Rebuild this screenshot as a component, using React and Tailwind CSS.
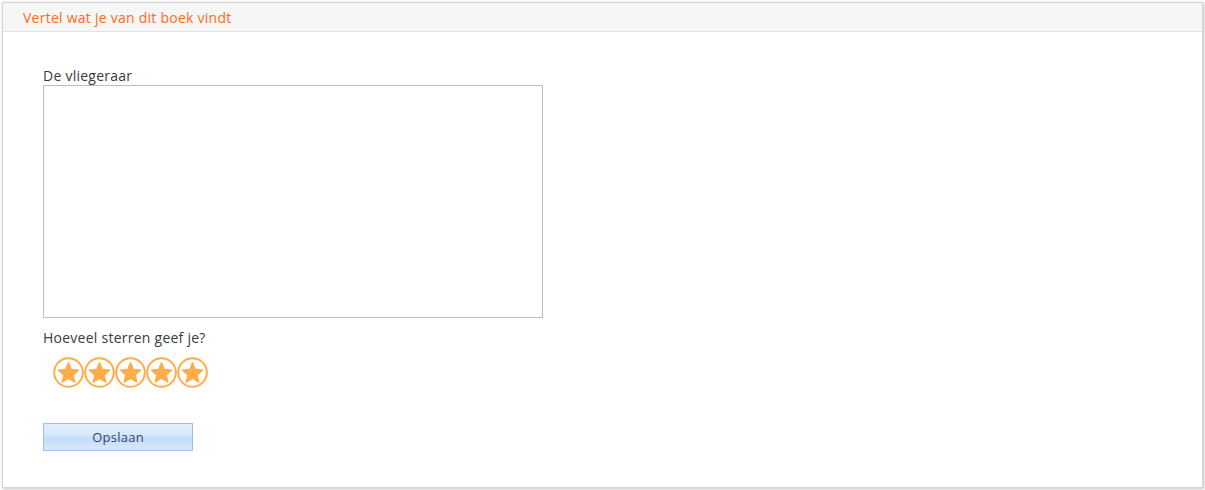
import React from 'react';

const Star = () => (
  <svg width="31" height="31" viewBox="0 0 31 31" className="block">
    <circle cx="15.5" cy="15.5" r="14.3" fill="#fff" stroke="#ffac4a" strokeWidth="2" />
    <polygon
      points="15.5,5.6 18.44,12.45 25.8,13.1 20.26,18.05 21.9,25.2 15.5,21.5 9.1,25.2 10.74,18.05 5.2,13.1 12.56,12.45"
      fill="#ffac4a"
      stroke="#ffac4a"
      strokeWidth="1.2"
      strokeLinejoin="round"
    />
  </svg>
);

export default function App() {
  return (
    <div className="w-[1205px] h-[490px] bg-white pt-[2px] pl-[2px] font-['Open_Sans',sans-serif] text-[14px] tracking-[0.25px]">
      <div className="w-[1201px] h-[486px] border border-[#d4d4d4] bg-white shadow-[1px_1px_3px_rgba(0,0,0,0.25)]">
        {/* Header */}
        <div className="h-[29px] bg-[#f6f6f6] border-b border-[#e2e2e2] pl-[20px] flex items-center">
          <span className="text-[#ff6a1a] leading-[18px] pt-[1px]">Vertel wat je van dit boek vindt</span>
        </div>

        {/* Body */}
        <div className="pl-[40px] pt-[35px]">
          <label className="block text-[#3a3a3a] leading-[18px]">De vliegeraar</label>
          <textarea className="block w-[500px] h-[233px] border border-[#bdbdbd] resize-none outline-none" />

          <div className="mt-[11px] text-[#3a3a3a] leading-[18px]">Hoeveel sterren geef je?</div>
          <div className="flex ml-[10px] mt-[10px]">
            {[0, 1, 2, 3, 4].map((i) => (
              <Star key={i} />
            ))}
          </div>

          <button className="mt-[35px] block w-[150px] h-[28px] border border-[#9fc0e9] bg-[linear-gradient(to_bottom,#e3eefc_0%,#d6e6fb_48%,#c4dcf9_52%,#cde2fb_80%,#dbeafd_100%)] text-[#2f466b] text-[13px] leading-[18px]">
            Opslaan
          </button>
        </div>
      </div>
    </div>
  );
}
